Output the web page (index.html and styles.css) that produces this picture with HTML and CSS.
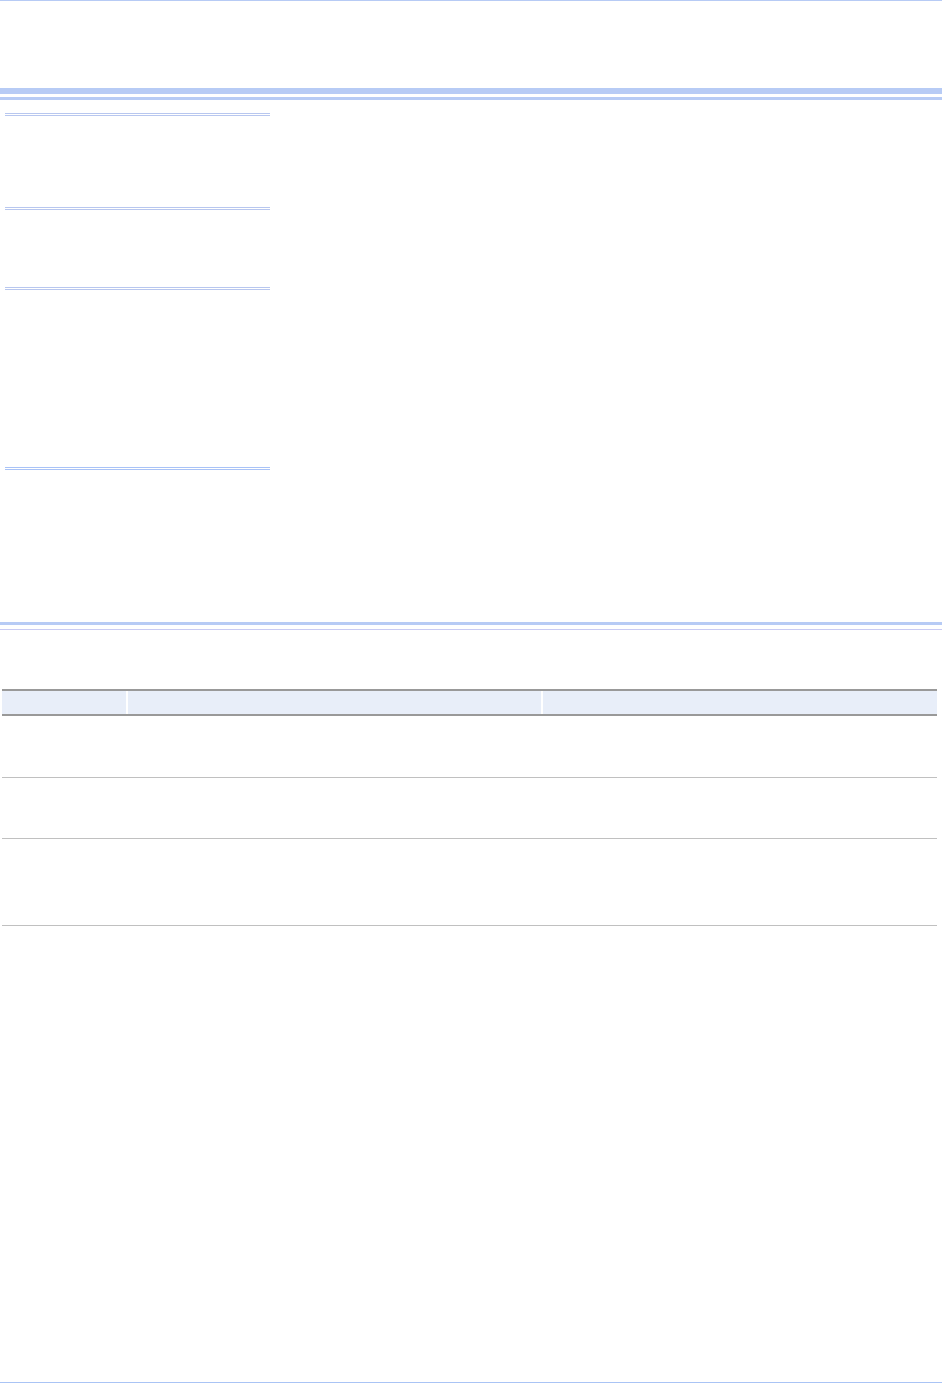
FILE: index.html
```html
<!DOCTYPE html>
<html lang="en">
<head>
<meta charset="utf-8">
<title>Page</title>
<link rel="stylesheet" href="styles.css">
</head>
<body>
<div class="page">
  <header class="masthead">
    <div class="masthead-body"></div>
    <div class="band"></div>
    <div class="band-line"></div>
  </header>
  <div class="main">
    <aside class="sidebar">
      <div class="side-rule"></div>
      <div class="side-sec s1"></div>
      <div class="side-rule"></div>
      <div class="side-sec s2"></div>
      <div class="side-rule"></div>
      <div class="side-sec s3"></div>
      <div class="side-rule alt"></div>
    </aside>
    <section class="content"></section>
  </div>
  <div class="section-band"></div>
  <div class="section-line"></div>
  <div class="section-head"></div>
  <table class="data">
    <colgroup>
      <col class="c1"><col class="c2"><col class="c3">
    </colgroup>
    <thead>
      <tr><th></th><th></th><th></th></tr>
    </thead>
    <tbody>
      <tr class="r1"><td></td><td></td><td></td></tr>
      <tr class="r2"><td></td><td></td><td></td></tr>
      <tr class="r3"><td></td><td></td><td></td></tr>
    </tbody>
  </table>
  <footer class="footer"></footer>
</div>
</body>
</html>
```

FILE: styles.css
```css
html, body {
  margin: 0;
  padding: 0;
  background: #ffffff;
  font-family: "Liberation Sans", Arial, sans-serif;
}

.page {
  min-height: 1383px;
  display: flex;
  flex-direction: column;
}

.masthead {
  border-top: 1px solid #b7cbf5;
}

.masthead-body {
  height: 87px;
}

.band {
  height: 6px;
  background: #b7cbf5;
}

.band-line {
  height: 3px;
  margin-top: 3px;
  background: #b7cbf5;
}

.main {
  display: flex;
  height: 522px;
}

.sidebar {
  width: 265px;
  margin-left: 5px;
  padding-top: 13px;
  display: flex;
  flex-direction: column;
}

.side-rule {
  height: 1px;
  border-top: 1px solid #b8c7ef;
  border-bottom: 1px solid #b8c7ef;
}

.side-rule.alt {
  border-color: #a9c3f7;
}

.s1 { height: 91px; }
.s2 { height: 77px; }
.s3 { height: 177px; }

.content {
  flex: 1;
}

.section-band {
  height: 3px;
  background: #b7cbf5;
}

.section-line {
  height: 1px;
  margin-top: 4px;
  background: #c9cbf3;
}

.section-head {
  height: 59px;
}

.data {
  width: 935px;
  margin-left: 2px;
  border-collapse: collapse;
  table-layout: fixed;
}

.c1 { width: 125px; }
.c2 { width: 415px; }
.c3 { width: 395px; }

.data th {
  height: 23px;
  padding: 0;
  background: #e8eef9;
  border-top: 2px solid #999999;
  border-bottom: 2px solid #999999;
}

.data th + th {
  border-left: 2px solid #ffffff;
}

.data td {
  padding: 0;
  border-bottom: 1px solid #c0c0c0;
}

.r1 td { height: 61px; }
.r2 td { height: 60px; }
.r3 td { height: 86px; }

.footer {
  margin-top: auto;
  height: 1px;
  background: #aac4f5;
}
```
